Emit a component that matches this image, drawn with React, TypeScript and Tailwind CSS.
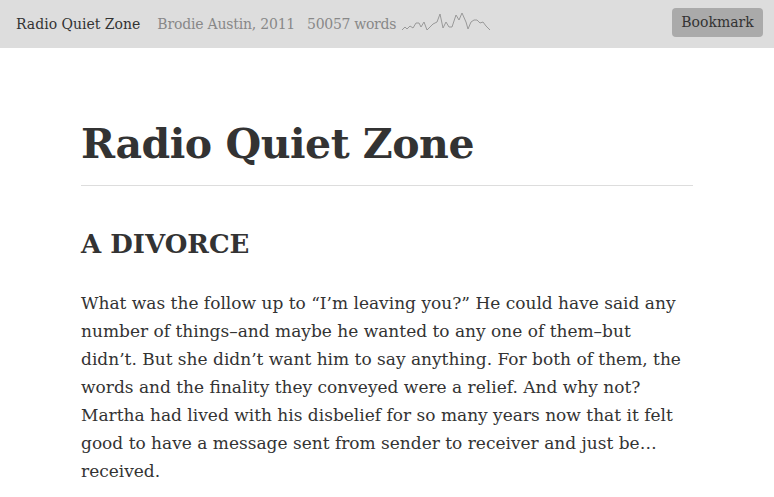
import React from "react";

const serif = { fontFamily: '"DejaVu Serif", "Liberation Serif", serif' };

function Sparkline() {
  const pts = [
    [0, 22], [3, 19], [5, 21], [8, 18], [11, 20], [14, 15], [17, 15], [19, 19], [22, 14], [25, 22],
    [28, 19], [31, 16], [35, 14], [38, 6], [41, 20], [44, 14], [47, 19], [50, 19], [54, 7], [57, 12],
    [60, 5], [64, 14], [66, 21], [69, 14], [72, 12], [75, 12], [78, 15], [81, 14], [84, 18], [88, 22],
  ];
  return (
    <svg width="90" height="26" viewBox="0 0 90 26" className="ml-[6px] self-start mt-[8px]">
      <polyline
        points={pts.map((p) => p.join(",")).join(" ")}
        fill="none"
        stroke="#999"
        strokeWidth="1"
        strokeLinejoin="round"
      />
    </svg>
  );
}

const lines = [
  "What was the follow up to “I’m leaving you?” He could have said any",
  "number of things–and maybe he wanted to any one of them–but",
  "didn’t. But she didn’t want him to say anything. For both of them, the",
  "words and the finality they conveyed were a relief. And why not?",
  "Martha had lived with his disbelief for so many years now that it felt",
  "good to have a message sent from sender to receiver and just be…",
  "received.",
];

export default function App() {
  return (
    <div className="min-h-[497px] bg-white text-[#333]" style={serif}>
      <div className="h-[48px] bg-[#dddddd] flex items-center pl-4 pr-[11px]">
        <span className="text-[14px] text-[#333]">Radio Quiet Zone</span>
        <span className="ml-[17px] text-[14px] text-[#888] tracking-[-0.2px]">Brodie Austin, 2011</span>
        <span className="ml-[12px] text-[14px] text-[#888] tracking-[-0.3px]">50057 words</span>
        <Sparkline />
        <div className="flex-1" />
        <button className="self-start mt-2 h-[29px] w-[91px] rounded-[4px] bg-[#aaaaaa] text-[14px] text-[#333]">
          Bookmark
        </button>
      </div>
      <div className="mx-[81px] w-[612px]">
        <h1 className="mt-[68px] text-[41px] font-bold leading-[56px] tracking-[-0.5px]">Radio Quiet Zone</h1>
        <div className="mt-[13px] h-px bg-[#dddddd]" />
        <h2 className="mt-[41px] text-[26px] font-bold leading-[34px]">A DIVORCE</h2>
        <p className="mt-[28px] text-[17px] leading-[28px]">
          {lines.map((l, i) => (
            <span key={i} className="block whitespace-nowrap">
              {l}
            </span>
          ))}
        </p>
      </div>
    </div>
  );
}
